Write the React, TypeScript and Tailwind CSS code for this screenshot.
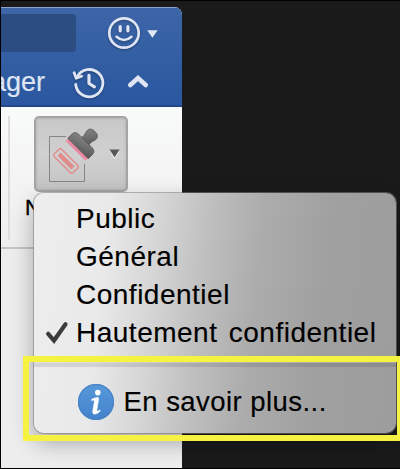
import React from "react";

const labels = ["Public", "Général", "Confidentiel", "Hautement confidentiel"];

function Smiley() {
  return (
    <svg className="h-[34px] w-[34px] shrink-0 drop-shadow-[0_1px_1px_rgba(0,0,0,0.3)]" viewBox="0 0 34 34" fill="none" stroke="#dfe5f3" strokeLinecap="round">
      <circle cx="17" cy="17" r="14.7" strokeWidth="2.7" />
      <path d="M13.2 10.6v4.2M20.9 10.6v4.2" strokeWidth="3.2" />
      <path d="M9.5 20.8Q17 27.2 24.5 20.8" strokeWidth="2.5" />
    </svg>
  );
}

function History() {
  return (
    <svg className="h-[32px] w-[34px] shrink-0 drop-shadow-[0_1px_1px_rgba(0,0,0,0.3)]" viewBox="0 0 34 32" fill="none" stroke="#dfe5f3" strokeLinecap="round" strokeLinejoin="round">
      <path d="M5 10.2A13.6 13.6 0 1 1 3.7 17.5" strokeWidth="2.8" />
      <path d="M2.1 5.8L4.2 11.2L9.6 9.2" strokeWidth="2.8" />
      <path d="M17 8.3v8.2l5.4 3.4" strokeWidth="3.2" />
    </svg>
  );
}

function Stamp() {
  return (
    <svg className="h-[58px] w-[54px] shrink-0" viewBox="46 122 54 58" fill="none">
      <defs>
        <linearGradient id="stampMetal" x1="0" y1="0" x2="1" y2="1">
          <stop stopColor="#858585" />
          <stop offset="0.5" stopColor="#707070" />
          <stop offset="1" stopColor="#555555" />
        </linearGradient>
      </defs>
      <path d="M66 133.5H49.5v45h35V161" stroke="#858585" />
      <g transform="translate(66 158) rotate(45)">
        <rect x="-13.3" y="-5.2" width="26.6" height="10.4" rx="1.8" stroke="#e28f8d" strokeWidth="1.6" />
        <rect x="-9.7" y="-2.2" width="19.4" height="4.4" fill="#e08c89" />
      </g>
      <g transform="translate(80.5 143) rotate(45)">
        <rect x="-14" y="2.6" width="28" height="4.4" fill="#e98aa2" />
        <path d="M-5.5-6Q-3.8-10-6.2-14.5Q-7-20.5 0-20.5Q7-20.5 6.2-14.5Q3.8-10 5.5-6Z" fill="url(#stampMetal)" stroke="#555" strokeWidth=".7" />
        <path d="M-14.5 3.5V-2Q-14.5-7-9.5-7H9.5Q14.5-7 14.5-2V3.5Z" fill="url(#stampMetal)" stroke="#555" strokeWidth=".7" />
      </g>
    </svg>
  );
}

function AppWindow() {
  return (
    <div className="flex h-[461px] w-[181px] flex-col overflow-hidden rounded-tr-[8px] bg-[#ededed]">
      <div className="flex h-[100px] shrink-0 flex-col border-b-2 border-[#24478a] bg-linear-to-b from-[#3d66a8] to-[#2a579f] shadow-[inset_0_1px_0_#8aa4cf]">
        <div className="flex h-[51px] items-start pt-[7px]">
          <div className="h-[38px] w-[75px] rounded-r-[4px] bg-[#2c4d82]" />
          <div className="ml-[31px] pt-[2px]"><Smiley /></div>
          <svg className="mt-[16px] ml-[6px] h-[8px] w-[11px]" viewBox="0 0 11 8"><path d="M.2.2h10.4L5.4 7.8z" fill="#e4e9f5" /></svg>
        </div>
        <div className="flex h-[47px] items-center">
          <div className="flex w-[44px] shrink-0 justify-end whitespace-nowrap text-[27px] leading-[34px] text-[#dfe5f3] [-webkit-text-stroke:0.2px_#dfe5f3]">ager</div>
          <div className="mt-[2px] ml-[27px]"><History /></div>
          <svg className="mb-[1px] ml-[21px] h-[14px] w-[22px]" viewBox="0 0 22 14" fill="none"><path d="M3.3 11L11 4L18.7 11" stroke="#dfe5f3" strokeWidth="4.5" strokeLinecap="round" /></svg>
        </div>
      </div>
      <div className="flex h-[142px] shrink-0 border-b-2 border-[#c4c4c4] bg-linear-to-b from-[#f9fafa] to-[#eeeeee]">
        <div className="mt-[9px] ml-[7px] h-[124px] w-[2px] bg-[#dddddd]" />
        <div className="ml-[15px] flex flex-col pt-[9px]">
          <div className="ml-[9px] flex h-[76px] w-[94px] items-center rounded-[5px] border-2 border-[#a4a4a4] bg-linear-to-b from-[#c8c8c8] via-[#d0d0d0] to-[#c4c4c4] pl-[10px] shadow-[inset_0_0_3px_#aaaaaa]">
            <Stamp />
            <svg className="ml-[9px] h-[10px] w-[12px]" viewBox="0 0 12 10"><path d="M.6 2h10L5.6 10z" fill="#eee" /><path d="M.5 .5h10.2L5.6 8.2z" fill="#585858" /></svg>
          </div>
          <div className="mt-[2px] text-[22px] leading-[27px] text-black [-webkit-text-stroke:0.4px_black]">N</div>
        </div>
      </div>
    </div>
  );
}

function Menu() {
  return (
    <div className="absolute top-[193px] left-[34px] flex h-[240px] w-[362px] flex-col rounded-[10px] bg-[linear-gradient(96deg,#eeeeee_0%,#e9e9e9_20%,#d4d4d4_34%,#bfbfbf_46%,#acacac_60%,#a0a0a0_78%,#9d9d9d_100%)] pt-[7px] text-black shadow-[0_0_0_1px_rgba(125,125,125,0.55),0_9px_22px_rgba(0,0,0,0.32)] [-webkit-text-stroke:0.15px_black]">
      {labels.map((label) => (
        <div key={label} className="flex h-[38px] items-center whitespace-nowrap text-[28px] tracking-[0.5px] [word-spacing:3px]">
          <div className="flex w-[42px] shrink-0 pl-[11px]">
            {label === "Hautement confidentiel" && (
              <svg className="h-[24px] w-[24px]" viewBox="0 0 24 24" fill="none"><path d="M3.2 12.8L9 19.5L20.5 3.2" stroke="#3c3c3c" strokeWidth="4.2" strokeLinecap="round" /></svg>
            )}
          </div>
          {label}
        </div>
      ))}
      <div className="mt-[9px] h-[6px] shrink-0 border-t-2 border-white/25 bg-black/10" />
      <div className="flex h-[66px] items-center pt-[3px] pl-[44px]">
        <div className="flex h-[36px] w-[36px] shrink-0 items-center justify-center rounded-full bg-linear-to-b from-[#5799da] to-[#4382cc] shadow-[inset_0_0_1px_1px_#477fc0]">
          <svg className="h-[28px] w-[14px]" viewBox="0 0 14 28" fill="none">
            <circle cx="8.8" cy="4.6" r="2.8" fill="white" />
            <path d="M2.6 11.3Q6.5 9.2 9.3 9.6Q9.9 9.8 9.7 10.8L7.8 22.4Q7.7 23.8 9.4 22.8L10.8 21.9L11.3 22.9Q8.8 26.2 5.8 26.2Q3.3 26.1 3.7 23.2L5.4 13.2Q5.5 12 4.2 12.2L2.7 12.6Z" fill="white" stroke="white" strokeWidth="0.5" />
          </svg>
        </div>
        <span className="mt-[1px] ml-[9.5px] whitespace-nowrap text-[27.5px] tracking-[0.45px]">En savoir plus...</span>
      </div>
    </div>
  );
}

export default function App() {
  return (
    <div className="relative h-[469px] w-[400px] overflow-hidden border-y border-l border-black bg-[#1a1a1a] pt-[6px] font-['Liberation_Sans',Arial,sans-serif]">
      <AppWindow />
      <div className="absolute inset-0 -top-px -left-px">
        <Menu />
        <div className="absolute top-[356px] left-[23px] h-[85px] w-[380px] border-6 border-[#f5f242]" />
      </div>
    </div>
  );
}
